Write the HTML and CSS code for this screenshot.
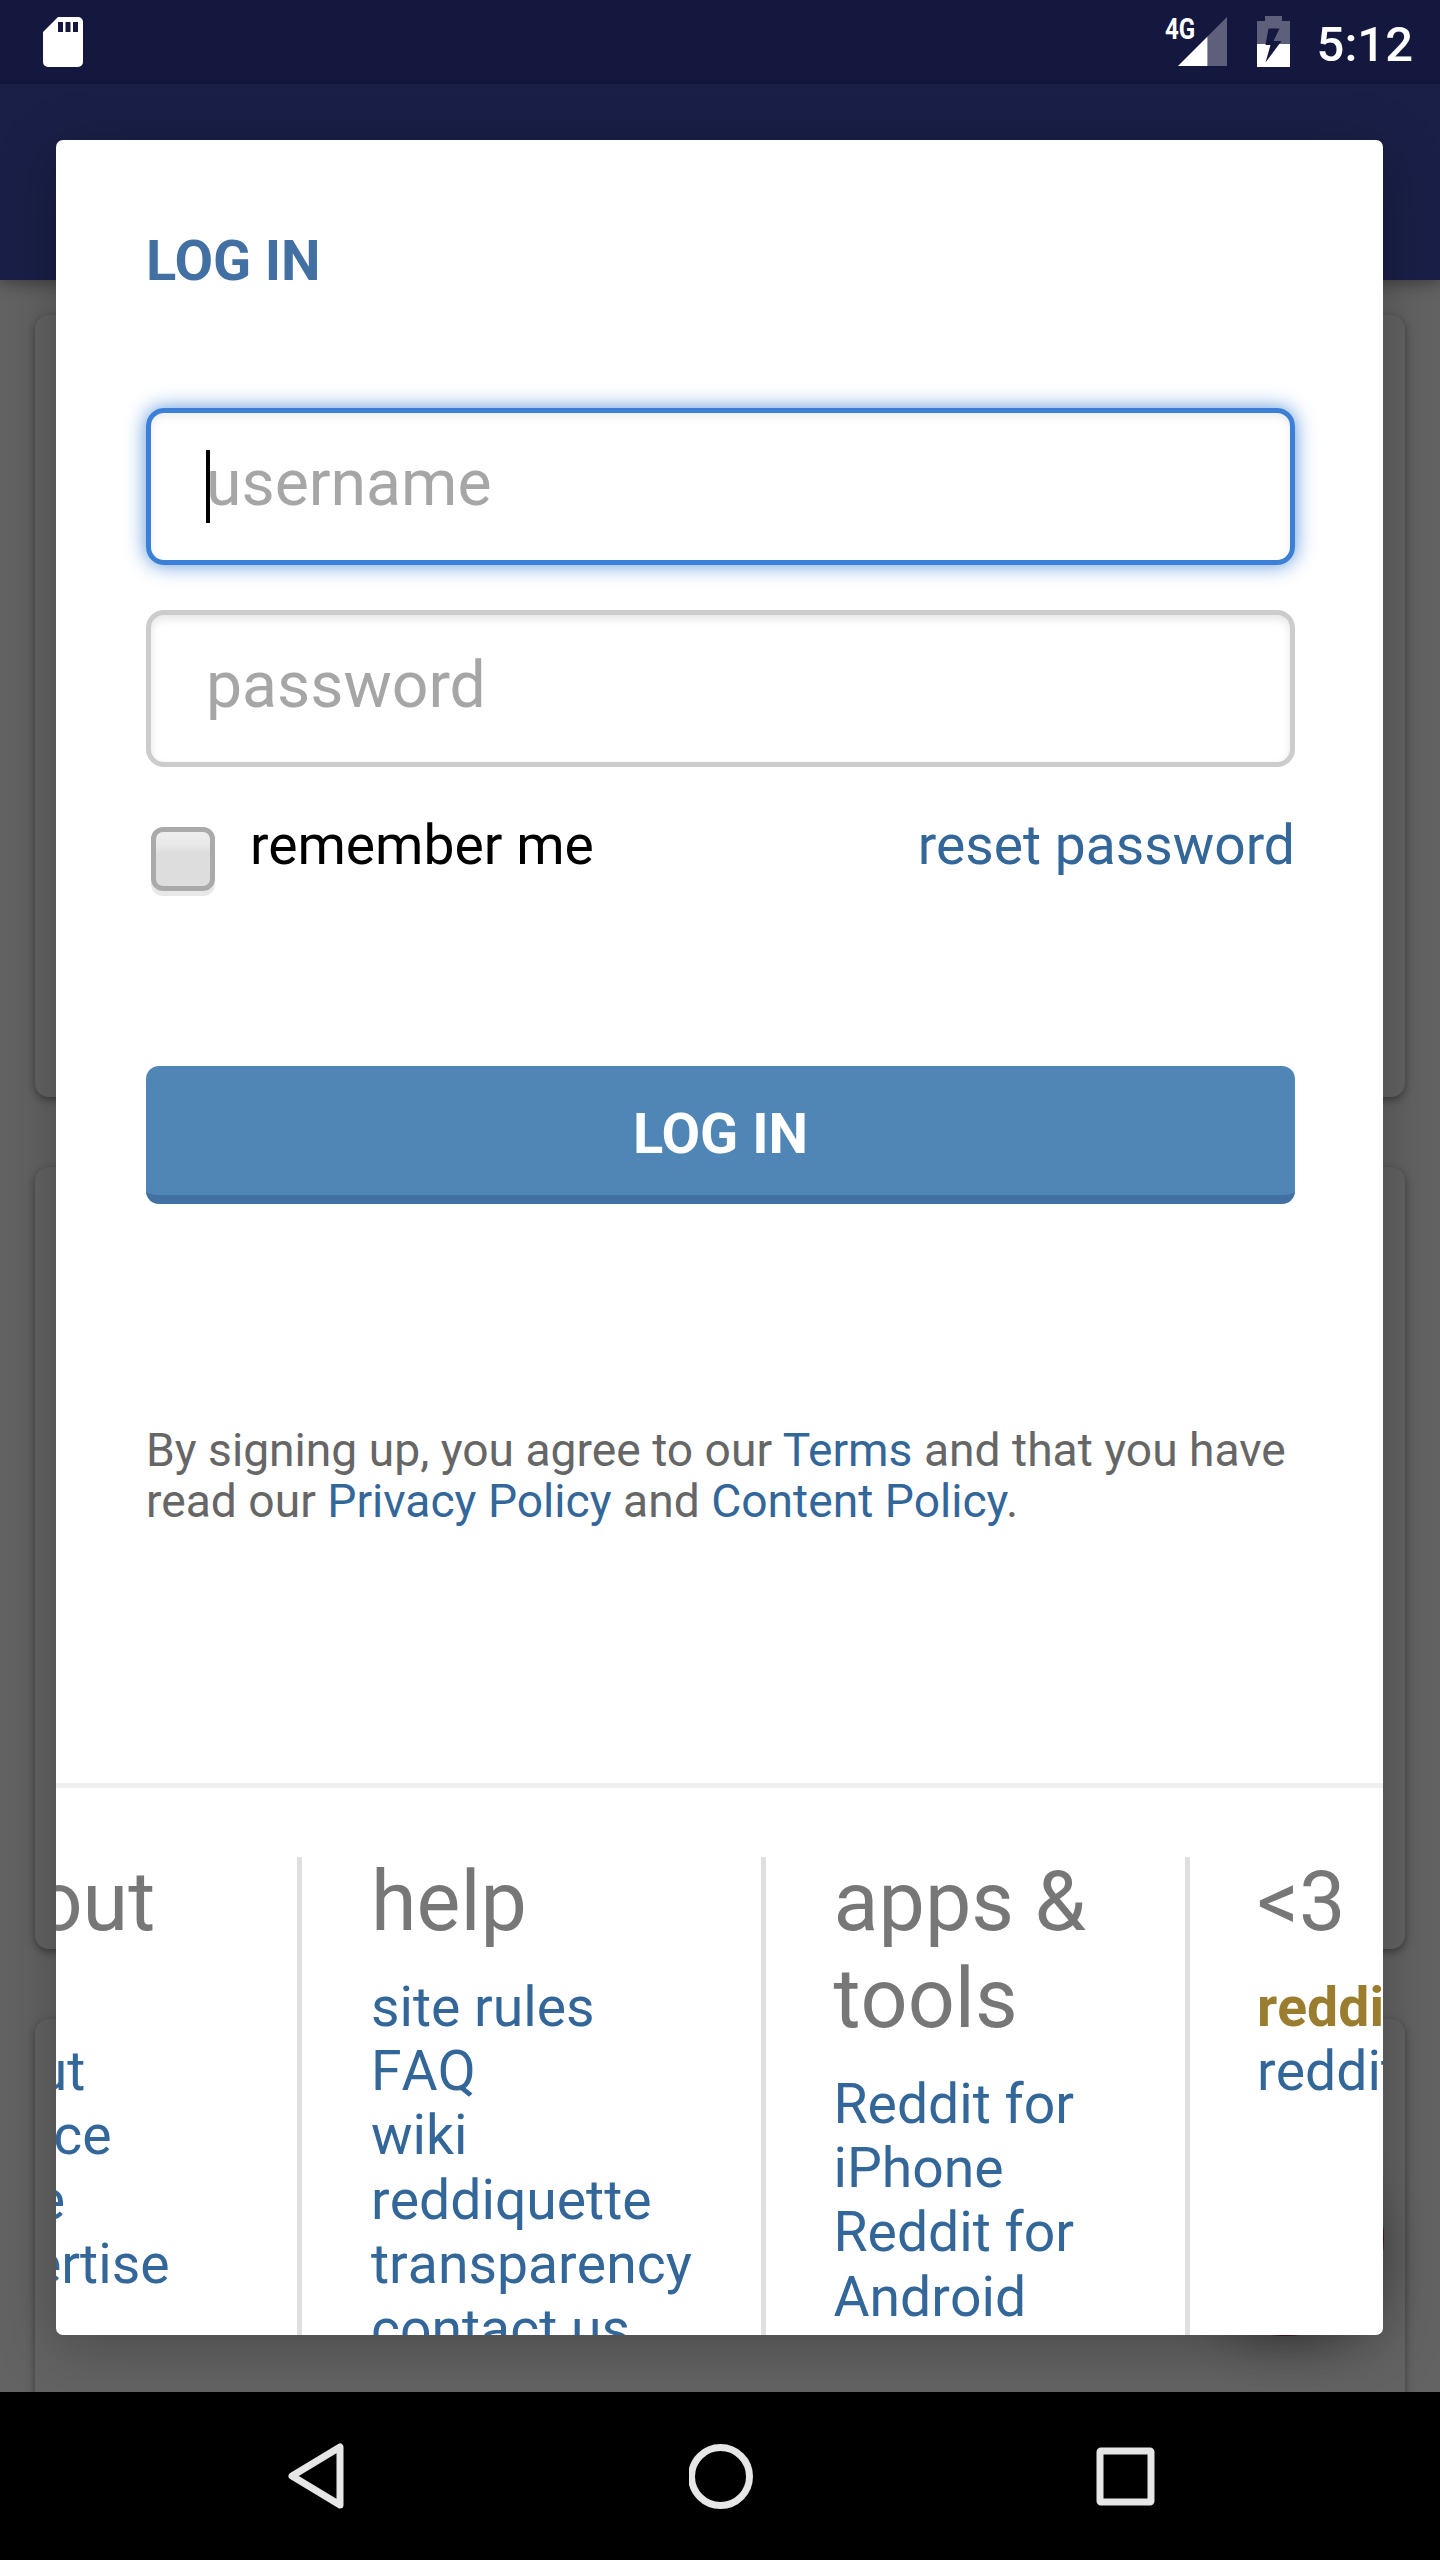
FILE: index.html
```html
<!DOCTYPE html>
<html lang="en">
<head>
<meta charset="utf-8">
<title>Log in</title>
<link rel="stylesheet" href="styles.css">
</head>
<body>
<div class="screen">
  <header class="status">
    <svg class="sd" width="40" height="50" viewBox="0 0 40 50"><path fill="#fff" fill-rule="evenodd" d="M15 0H35a5 5 0 0 1 5 5V45a5 5 0 0 1-5 5H5a5 5 0 0 1-5-5V15ZM15 5V15H20V5ZM22.500 5V15H27.500V5ZM30 5V15H35V5Z"/></svg>
    <div class="status-right">
      <span class="net">4G</span>
      <svg class="signal" width="49" height="49" viewBox="0 0 49 49"><path fill="#5d5f7b" d="M49 0V49H29.500V19.500Z"/><path fill="#fff" d="M29.500 19.500V49H0Z"/></svg>
      <svg class="battery" width="33" height="51" viewBox="0 0 33 51"><path fill="#5d5f7b" d="M8 0H25V5H33V28H0V5H8Z"/><path fill="#fff" d="M0 28H33V51H0Z"/><path fill="#14183f" d="M11.500 12.500H22.500L16.500 25H24.500L8.500 46.500L13.500 29H8.500Z"/></svg>
      <span class="clock">5:12</span>
    </div>
  </header>
  <div class="appbar"></div>
  <main class="feed">
    <div class="card"></div>
    <div class="card"></div>
    <div class="card"></div>
  </main>
  <nav class="navbar">
    <svg width="60" height="66" viewBox="0 0 60 66"><path fill="none" stroke="#e6e6e6" stroke-width="7" stroke-linejoin="round" d="M53 4V62L5 33Z"/></svg>
    <svg width="66" height="66" viewBox="0 0 66 66"><circle cx="31.500" cy="33.500" r="29" fill="none" stroke="#e6e6e6" stroke-width="7"/></svg>
    <svg width="60" height="60" viewBox="0 0 60 60"><rect x="4" y="5" width="51" height="51" rx="1" fill="none" stroke="#e6e6e6" stroke-width="7"/></svg>
  </nav>
  <div class="fab"></div>
  <section class="dialog">
    <form class="login">
      <h1 class="title">LOG IN</h1>
      <div class="field focused"><span class="caret"></span>username</div>
      <div class="field">password</div>
      <div class="options">
        <span class="check"></span>
        <span class="remember">remember me</span>
        <a class="link">reset password</a>
      </div>
      <div class="submit">LOG IN</div>
      <p class="terms">By signing up, you agree to our <a class="link">Terms</a> and that you have<br>read our <a class="link">Privacy Policy</a> and <a class="link">Content Policy</a>.</p>
    </form>
    <footer class="footer">
      <div class="col about"><h2>about</h2><a>blog</a><a>about</a><a>source</a><a>code</a><a>advertise</a></div>
      <div class="col help"><h2>help</h2><a>site rules</a><a>FAQ</a><a>wiki</a><a>reddiquette</a><a>transparency</a><a>contact us</a></div>
      <div class="col apps"><h2>apps &amp;<br>tools</h2><a>Reddit for</a><a>iPhone</a><a>Reddit for</a><a>Android</a></div>
      <div class="col love"><h2>&lt;3</h2><a class="gold">reddit gold</a><a>redditgifts</a></div>
    </footer>
  </section>
</div>
</body>
</html>
```
FILE: styles.css
```css
* { box-sizing: border-box; }
body { margin: 0; font-family: Roboto, sans-serif; }
.screen { position: relative; width: 1440px; height: 2560px; overflow: hidden; display: flex; flex-direction: column; background: #636363; }
.status { height: 84px; flex: none; position: relative; z-index: 1; background: linear-gradient(#14183f 78px, #11153a 84px); display: flex; justify-content: space-between; padding: 17px 27px 0 43px; color: #fff; }
.status-right { display: flex; align-items: flex-start; }
.net { font: 700 29px/29px "Roboto", sans-serif; width: 13px; margin-top: -2px; white-space: nowrap; transform: scaleX(.83); transform-origin: 0 0; }
.battery { margin: -1px 0 0 30px; }
.clock { font-weight: 500; font-size: 49px; line-height: 56px; margin-left: 27px; }
.appbar { height: 196px; flex: none; background: #191f47; box-shadow: 0 4px 14px rgba(0,0,0,.35); }
.feed { flex: 1; min-height: 0; overflow: hidden; padding: 35px 35px 0; display: flex; flex-direction: column; gap: 70px; }
.card { flex: none; height: 782px; border-radius: 14px; background: #636363; box-shadow: 0 3px 9px rgba(0,0,0,.4); }
.navbar { height: 168px; flex: none; position: relative; z-index: 4; background: #000; display: flex; align-items: center; justify-content: space-between; padding: 0 284px 0 287px; }
.fab { position: absolute; left: 1188px; top: 2140px; width: 196px; height: 196px; border-radius: 50%; background: #4a1024; box-shadow: 0 12px 40px rgba(0,0,0,.28); }
.dialog { position: absolute; left: 56px; top: 140px; width: 1327px; height: 2195px; border-radius: 7px; background: #fff; overflow: hidden; z-index: 2; display: flex; flex-direction: column; box-shadow: 0 12px 60px rgba(0,0,0,.25); }
.login { height: 1643px; flex: none; padding: 88px 88px 0 90px; display: flex; flex-direction: column; }
.title { margin: 0; font-size: 56px; line-height: 66px; font-weight: 700; color: #4270a2; letter-spacing: -.1px; }
.field { height: 157px; margin-top: 45px; border: 5px solid #ccc; border-radius: 18px; padding: 0 55px; font-size: 64.300px; line-height: 140px; color: #a6a6a6; position: relative; box-shadow: inset 0 4px 9px rgba(0,0,0,.1); }
.field.focused { margin-top: 114px; border-color: #3b80d6; box-shadow: inset 0 4px 9px rgba(0,0,0,.08), 0 0 20px rgba(59,128,214,.85); }
.caret { position: absolute; left: 55px; top: 37px; width: 4px; height: 73px; background: #000; }
.options { display: flex; margin-top: 45px; height: 91px; font-size: 55.200px; line-height: 66px; color: #000; }
.check { width: 64px; height: 64px; margin: 15px 35px 0 5px; border: 5px solid #aaa; border-radius: 12px; background: linear-gradient(#eee, #e8e8e8 25%, #ddd 40%, #ddd); box-shadow: 0 5px 0 #e8e8e8; }
.remember { flex: 1; }
.link { color: #336699; }
.submit { height: 138px; margin-top: 163px; border-radius: 13px; background: #4f86b5; border-bottom: 9px solid #4270a2; color: #fff; font-weight: 700; font-size: 56px; line-height: 137px; text-align: center; }
.terms { margin: 221px 0 0; color: #666; font-size: 46.200px; line-height: 51px; white-space: nowrap; }
.footer { flex: 1; border-top: 5px solid #efefef; padding-top: 69px; display: flex; margin-left: -181px; width: 1800px; }
.col { height: 500px; flex: none; padding: 0 0 0 69px; border-right: 5px solid #dfdfdf; font-size: 55.300px; line-height: 64.400px; color: #336699; font-kerning: none; }
.col h2 { margin: -4px 0 25.500px; font-weight: 400; font-size: 82.700px; line-height: 97px; color: #777; }
.col a { display: block; white-space: nowrap; }
.about { width: 427px; }
.help { width: 464px; }
.apps { width: 424px; padding-left: 67.500px; }
.love { width: 400px; padding-left: 67px; }
.gold { color: #9a7d2e; font-weight: 700; }
```
